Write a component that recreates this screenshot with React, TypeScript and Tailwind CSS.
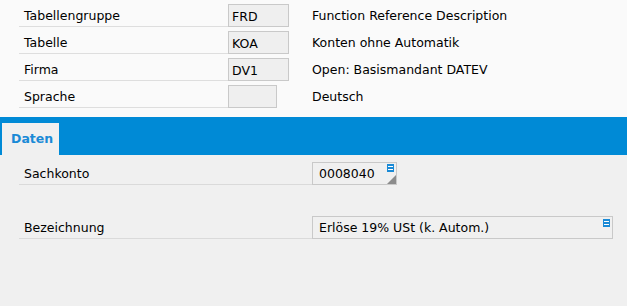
import React from 'react';

// Kopfbereich: Tabelle / Firma / Sprache
const kopfZeilen = [
  { label: 'Tabellengruppe', wert: 'FRD', text: 'Function Reference Description', breite: 'w-[61px]' },
  { label: 'Tabelle', wert: 'KOA', text: 'Konten ohne Automatik', breite: 'w-[61px]' },
  { label: 'Firma', wert: 'DV1', text: 'Open: Basismandant DATEV', breite: 'w-[61px]' },
  { label: 'Sprache', wert: '', text: 'Deutsch', breite: 'w-[49px]' },
];

function ListIcon() {
  return (
    <svg width="7" height="8" viewBox="0 0 7 8" className="block">
      <rect x="0" y="0" width="7" height="8" fill="#1a8ad6" />
      <rect x="1" y="2" width="5" height="1" fill="#ffffff" />
      <rect x="1" y="5" width="5" height="1" fill="#ffffff" />
    </svg>
  );
}

export default function App() {
  return (
    <div
      className="h-[306px] w-[627px] flex flex-col text-[12.5px] text-black"
      style={{ fontFamily: '"DejaVu Sans", Verdana, sans-serif' }}
    >
      {/* Kopf */}
      <div className="bg-[#fafafa] h-[117px]">
        {kopfZeilen.map((z) => (
          <div key={z.label} className="flex h-[27px]">
            <div className="ml-[19px] w-[209px] h-[27px] border-b border-[#dedede] pt-[5px] pl-[5px]">
              <span className="leading-[22px]">{z.label}</span>
            </div>
            <div className="w-[84px] pt-[4px]">
              <div className={`${z.breite} h-[23px] border border-[#c9c9c9] bg-[#efefef] pl-[3px] pt-[1px] leading-[21px]`}>
                {z.wert}
              </div>
            </div>
            <div className="pt-[5px] leading-[22px]">{z.text}</div>
          </div>
        ))}
      </div>

      {/* Reiter */}
      <div className="h-[38px] bg-[#008ad6] flex items-end pl-[2px]">
        <div className="w-[57px] h-[32px] bg-[#f0f0f0] pl-[9px] pt-[1px] flex items-center font-bold text-[#1a8ad6]">
          Daten
        </div>
      </div>

      {/* Inhalt */}
      <div className="flex-1 bg-[#f0f0f0] pt-[7px]">
        <div className="flex h-[23px]">
          <div className="ml-[19px] w-[293px] border-b border-[#dadada] pl-[5px] pt-[1px] leading-[21px]">Sachkonto</div>
          <div className="relative w-[85px] h-[23px] border border-[#c9c9c9] bg-[#f0f0f0] pl-[6px] pt-[1px] leading-[20px]">
            0008040
            <div className="absolute right-[2px] top-[1px]">
              <ListIcon />
            </div>
            <div
              className="absolute right-0 bottom-0 w-[9px] h-[9px] bg-[#8c8c8c]"
              style={{ clipPath: 'polygon(100% 0, 100% 100%, 0 100%)' }}
            />
          </div>
        </div>

        <div className="flex h-[23px] mt-[31px]">
          <div className="ml-[19px] w-[293px] border-b border-[#dadada] pl-[5px] pt-[1px] leading-[21px]">Bezeichnung</div>
          <div className="relative w-[301px] h-[23px] border border-[#c9c9c9] bg-[#f0f0f0] pl-[6px] pt-[1px] leading-[20px]">
            Erlöse 19% USt (k. Autom.)
            <div className="absolute right-[2px] top-[2px]">
              <ListIcon />
            </div>
          </div>
        </div>
      </div>
    </div>
  );
}
